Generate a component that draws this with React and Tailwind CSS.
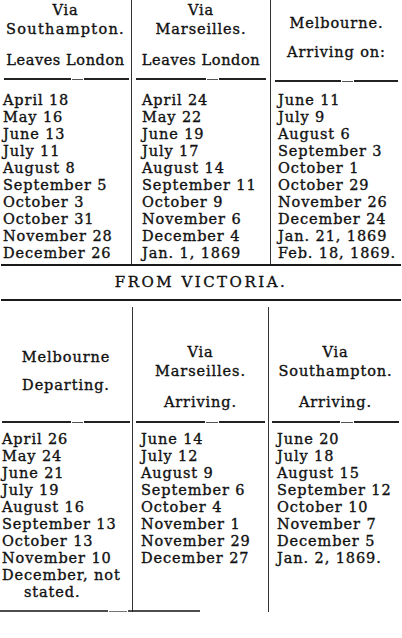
import React from "react";

const top = {
  south: [
    "April 18",
    "May 16",
    "June 13",
    "July 11",
    "August 8",
    "September 5",
    "October 3",
    "October 31",
    "November 28",
    "December 26",
  ],
  marseilles: [
    "April 24",
    "May 22",
    "June 19",
    "July 17",
    "August 14",
    "September 11",
    "October 9",
    "November 6",
    "December 4",
    "Jan. 1, 1869",
  ],
  melbourne: [
    "June 11",
    "July 9",
    "August 6",
    "September 3",
    "October 1",
    "October 29",
    "November 26",
    "December 24",
    "Jan. 21, 1869",
    "Feb. 18, 1869.",
  ],
};

const bottom = {
  departing: [
    "April 26",
    "May 24",
    "June 21",
    "July 19",
    "August 16",
    "September 13",
    "October 13",
    "November 10",
    "December, not",
  ],
  marseilles: [
    "June 14",
    "July 12",
    "August 9",
    "September 6",
    "October 4",
    "November 1",
    "November 29",
    "December 27",
  ],
  south: [
    "June 20",
    "July 18",
    "August 15",
    "September 12",
    "October 10",
    "November 7",
    "December 5",
    "Jan. 2, 1869.",
  ],
};

// printed rule made of uneven dashes
const Rule = ({ className = "" }) => (
  <div className={`flex gap-[1px] items-center ${className}`}>
    <div className="h-[2px] flex-[6] bg-[#222]" />
    <div className="h-[1px] flex-[1] bg-[#555]" />
    <div className="h-[1.5px] flex-[4] bg-[#222]" />
  </div>
);

const Rows = ({ items, className = "" }) => (
  <div className={`leading-[17px] ${className}`}>
    {items.map((d) => (
      <div key={d} className="whitespace-nowrap">
        {d}
      </div>
    ))}
  </div>
);

const App = () => {
  return (
    <div
      className="w-[402px] h-[638px] bg-white text-[#111] text-[14.5px] tracking-[0.9px] overflow-hidden [-webkit-text-stroke:0.35px_#111]"
      style={{ fontFamily: '"DejaVu Serif", "Liberation Serif", serif' }}
    >
      {/* From England */}
      <div className="grid grid-cols-[131px_139px_1fr] h-[264px]">
        <div className="flex flex-col">
          <div className="h-[78px] text-center leading-[19px] whitespace-nowrap pt-[1px]">
            <div>Via</div>
            <div className="tracking-[1.3px]">Southampton.</div>
            <div className="mt-[12px] -mx-[2px] tracking-[0.6px]">Leaves London</div>
          </div>
          <Rule className="mr-[2px] ml-[4px]" />
          <Rows items={top.south} className="mt-[12px] pl-[3px]" />
        </div>
        <div className="flex flex-col border-l border-[#333]">
          <div className="h-[78px] text-center leading-[19px] whitespace-nowrap pt-[1px]">
            <div>Via</div>
            <div>Marseilles.</div>
            <div className="mt-[12px] tracking-[0.6px]">Leaves London</div>
          </div>
          <Rule className="mx-[4px]" />
          <Rows items={top.marseilles} className="mt-[12px] pl-[10px]" />
        </div>
        <div className="flex flex-col border-l border-[#333]">
          <div className="h-[80px] text-center leading-[19px] whitespace-nowrap pt-[14px]">
            <div>Melbourne.</div>
            <div className="mt-[10px]">Arriving on:</div>
          </div>
          <Rule className="mx-[4px]" />
          <Rows items={top.melbourne} className="mt-[10px] pl-[7px]" />
        </div>
      </div>

      <div className="h-[2px] bg-[#1a1a1a] mx-[1px]" />
      <div className="h-[33px] flex items-center justify-center tracking-[2.5px] text-[15px]">
        FROM VICTORIA.
      </div>
      <div className="h-[2px] bg-[#1a1a1a] mx-[1px]" />

      {/* From Victoria */}
      <div className="grid grid-cols-[132px_136px_1fr] h-[303px] mt-[6px]">
        <div className="flex flex-col">
          <div className="h-[114px] text-center leading-[19px] whitespace-nowrap pt-[41px]">
            <div>Melbourne</div>
            <div className="mt-[9px]">Departing.</div>
          </div>
          <Rule className="mx-[2px]" />
          <Rows items={bottom.departing} className="mt-[8px] pl-[2px]" />
          <div className="leading-[17px] pl-[24px]">stated.</div>
          <Rule className="mt-[9px] w-[200px] opacity-80" />
        </div>
        <div className="flex flex-col border-l border-[#333]">
          <div className="h-[114px] text-center leading-[19px] whitespace-nowrap pt-[36px]">
            <div>Via</div>
            <div>Marseilles.</div>
            <div className="mt-[12px]">Arriving.</div>
          </div>
          <Rule className="mx-[3px]" />
          <Rows items={bottom.marseilles} className="mt-[8px] pl-[8px]" />
        </div>
        <div className="flex flex-col border-l border-[#333]">
          <div className="h-[114px] text-center leading-[19px] whitespace-nowrap pt-[36px]">
            <div>Via</div>
            <div>Southampton.</div>
            <div className="mt-[12px]">Arriving.</div>
          </div>
          <Rule className="mx-[3px]" />
          <Rows items={bottom.south} className="mt-[8px] pl-[8px]" />
        </div>
      </div>
    </div>
  );
};

export default App;
